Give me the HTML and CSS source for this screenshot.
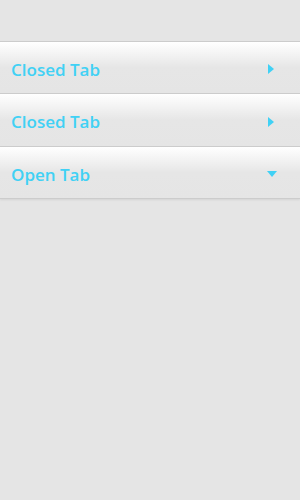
FILE: index.html
```html
<!DOCTYPE html>
<html>
<head>
<meta charset="utf-8">
<link rel="stylesheet" href="styles.css">
</head>
<body>
<div class="accordion">
  <div class="tab">
    <span class="label">Closed Tab</span>
    <span class="arrow arrow-right"></span>
  </div>
  <div class="tab tab-mid">
    <span class="label">Closed Tab</span>
    <span class="arrow arrow-right"></span>
  </div>
  <div class="tab tab-last">
    <span class="label">Open Tab</span>
    <span class="arrow arrow-down"></span>
  </div>
</div>
</body>
</html>
```
FILE: styles.css
```css
html, body {
  margin: 0;
  padding: 0;
  background: #e5e5e5;
  height: 100%;
}
body {
  padding-top: 41px;
  box-sizing: border-box;
  font-family: "Open Sans", sans-serif;
}
.accordion {
  display: flex;
  flex-direction: column;
  box-shadow: 0 1px 2px rgba(0,0,0,0.08);
}
.tab {
  height: 51px;
  border-top: 1px solid #cccccc;
  background: linear-gradient(to bottom, #ffffff 0%, #e6e6e6 50%, #e5e5e5 100%);
  display: flex;
  align-items: center;
  justify-content: space-between;
  padding: 0 23px 0 11px;
}
.tab-mid {
  height: 52px;
}
.tab-last {
  border-bottom: 1px solid #cccccc;
}
.label {
  color: #40d1f5;
  font-size: 17px;
  font-weight: 600;
  margin-top: 3px;
}
.arrow {
  width: 0;
  height: 0;
}
.arrow-right {
  border-top: 5.5px solid transparent;
  border-bottom: 5.5px solid transparent;
  border-left: 6px solid #40d1f5;
  margin-right: 3px;
  margin-top: 3px;
}
.arrow-down {
  border-left: 5.5px solid transparent;
  border-right: 5.5px solid transparent;
  border-top: 6px solid #40d1f5;
  margin-top: 2px;
}
```
